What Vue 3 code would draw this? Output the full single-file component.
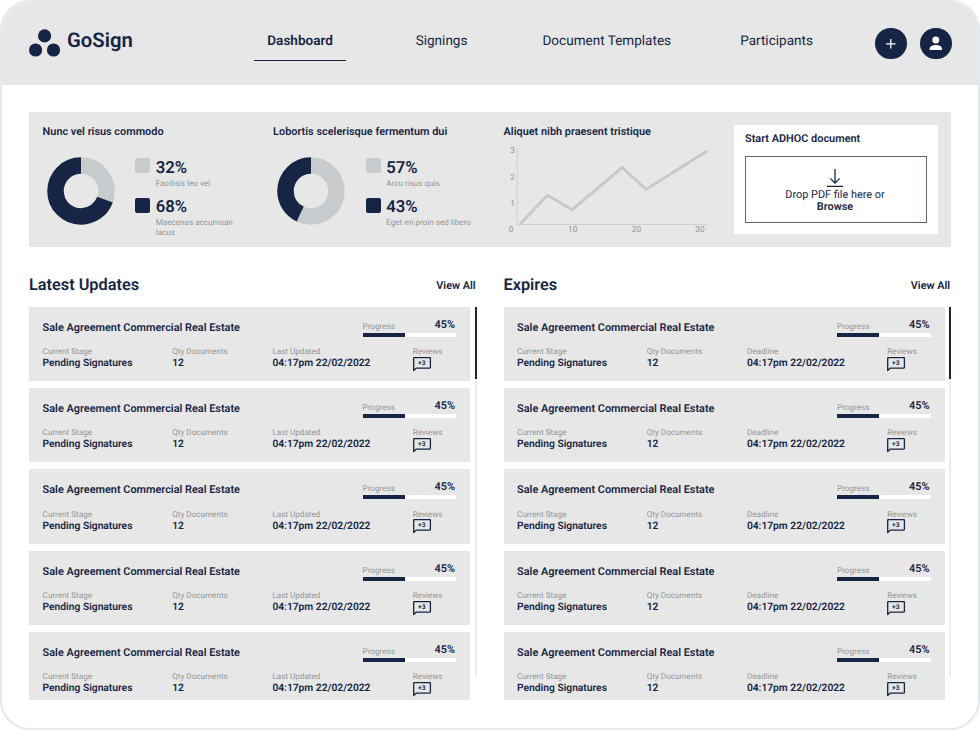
<template>
  <div class="window">
    <header class="header">
      <div class="brand">
        <svg class="brand-mark" width="32" height="28" viewBox="0 0 32 28">
          <circle cx="15.6" cy="6.9" r="6.6" />
          <circle cx="6.6" cy="21" r="6.6" />
          <circle cx="24.5" cy="21" r="6.6" />
        </svg>
        <span class="brand-name">GoSign</span>
      </div>
      <nav class="nav">
        <a
          v-for="item in navItems"
          :key="item"
          class="nav-item"
          :class="{ active: item === activeItem }"
          @click="activeItem = item"
        ><span>{{ item }}</span></a>
      </nav>
      <div class="actions">
        <button class="round-button">
          <svg width="32" height="32" viewBox="0 0 32 32">
            <path d="M16 11.2V20.8M11.2 16H20.8" stroke="#fff" stroke-width="1.3" />
          </svg>
        </button>
        <button class="round-button">
          <svg width="32" height="32" viewBox="0 0 32 32" fill="#fff">
            <circle cx="16" cy="12.2" r="3.5" />
            <path d="M9.8 22.2V20.8C9.8 18.2 13.4 17.1 16 17.1S22.2 18.2 22.2 20.8V22.2Z" />
          </svg>
        </button>
      </div>
    </header>

    <section class="stats">
      <div v-for="chart in charts" :key="chart.title" class="stat">
        <h3>{{ chart.title }}</h3>
        <div class="donut-row">
          <svg class="donut" width="68" height="68" viewBox="0 0 68 68">
            <circle class="ring light" cx="34" cy="34" r="25.5" />
            <circle
              class="ring dark"
              cx="34"
              cy="34"
              r="25.5"
              pathLength="100"
              :stroke-dasharray="`${100 - chart.split} 100`"
              :stroke-dashoffset="-chart.split"
              transform="rotate(-90 34 34)"
            />
          </svg>
          <div class="legend">
            <div v-for="(part, i) in chart.parts" :key="i" class="legend-item">
              <span class="swatch" :class="{ dark: i === 1 }"></span>
              <div>
                <div class="legend-value">{{ part.value }}%</div>
                <div class="legend-label">{{ part.label }}</div>
              </div>
            </div>
          </div>
        </div>
      </div>

      <div class="stat">
        <h3>Aliquet nibh praesent tristique</h3>
        <svg class="line-chart" width="214" height="94" viewBox="0 0 214 94">
          <path d="M13.2 3V79.5H204" fill="none" stroke="#cdd1d4" stroke-width="1" />
          <path d="M15.8 79.3 43.5 50.5 68.2 64.7 118.1 22.5 142 44.4 203 6" fill="none" stroke="#c8c9ca" stroke-width="3" />
          <g class="axis">
            <text x="11" y="8.4" text-anchor="end">3</text>
            <text x="11" y="34.8" text-anchor="end">2</text>
            <text x="11" y="61.2" text-anchor="end">1</text>
            <text x="7.2" y="87.2" text-anchor="middle">0</text>
            <text x="68.7" y="87.2" text-anchor="middle">10</text>
            <text x="132.4" y="87.2" text-anchor="middle">20</text>
            <text x="196" y="87.2" text-anchor="middle">30</text>
          </g>
        </svg>
      </div>

      <div class="adhoc">
        <h3>Start ADHOC document</h3>
        <div class="dropzone">
          <svg width="18" height="20" viewBox="0 0 18 20" fill="none" stroke="#162543" stroke-width="1.3">
            <path d="M9 0V14M4.3 9.4 9 14.1 13.7 9.4M.8 17.3H17.2" />
          </svg>
          <span>Drop PDF file here or</span>
          <b>Browse</b>
        </div>
      </div>
    </section>

    <main class="lists">
      <section v-for="list in lists" :key="list.title" class="list">
        <div class="list-head">
          <h2>{{ list.title }}</h2>
          <a class="view-all">View All</a>
        </div>
        <div class="list-body">
          <div class="cards">
            <article v-for="(doc, i) in documents" :key="i" class="card">
              <div class="card-top">
                <h4>{{ doc.title }}</h4>
                <div class="progress">
                  <div class="progress-text">
                    <span class="label">Progress</span>
                    <b>{{ doc.progress }}%</b>
                  </div>
                  <div class="track">
                    <div class="fill" :style="{ width: doc.progress + '%' }"></div>
                  </div>
                </div>
              </div>
              <div class="card-bottom">
                <div class="field stage">
                  <span class="label">Current Stage</span>
                  <b>{{ doc.stage }}</b>
                </div>
                <div class="field qty">
                  <span class="label">Qty Documents</span>
                  <b>{{ doc.qty }}</b>
                </div>
                <div class="field date">
                  <span class="label">{{ list.dateLabel }}</span>
                  <b>{{ doc.date }}</b>
                </div>
                <div class="field">
                  <span class="label">Reviews</span>
                  <svg class="bubble" width="19" height="15" viewBox="0 0 19 15">
                    <path d="M.7 13.6V1.2Q.7 .7 1.2 .7H16.9Q17.4 .7 17.4 1.2V10.6Q17.4 11.1 16.9 11.1H3.4Z" fill="none" stroke="#162543" stroke-width="1.3" stroke-linejoin="round" />
                    <text x="8.8" y="8.4" text-anchor="middle">+{{ doc.reviews }}</text>
                  </svg>
                </div>
              </div>
            </article>
          </div>
          <div class="scrollbar">
            <div class="thumb"></div>
          </div>
        </div>
      </section>
    </main>
  </div>
</template>

<script setup>
import { ref } from 'vue';

const navItems = ['Dashboard', 'Signings', 'Document Templates', 'Participants'];
const activeItem = ref('Dashboard');

// split - where the dark arc starts, in percent of the ring
const charts = [
  {
    title: 'Nunc vel risus commodo',
    split: 30.5,
    parts: [
      { value: 32, label: 'Facilisis leo vel' },
      { value: 68, label: 'Maecenas accumsan lacus' }
    ]
  },
  {
    title: 'Lobortis scelerisque fermentum dui',
    split: 57,
    parts: [
      { value: 57, label: 'Arcu risus quis' },
      { value: 43, label: 'Eget mi proin sed libero' }
    ]
  }
];

const lists = [
  { title: 'Latest Updates', dateLabel: 'Last Updated' },
  { title: 'Expires', dateLabel: 'Deadline' }
];

const documents = Array.from({ length: 5 }, () => ({
  title: 'Sale Agreement Commercial Real Estate',
  progress: 45,
  stage: 'Pending Signatures',
  qty: 12,
  date: '04:17pm 22/02/2022',
  reviews: 3
}));
</script>

<style>
body {
  margin: 0;
  background: #fff;
}
</style>

<style scoped>
.window {
  box-sizing: border-box;
  width: 980px;
  height: 730px;
  border: 2px solid #e5e9ec;
  border-radius: 30px;
  overflow: hidden;
  background: #fff;
  color: #162543;
  font-family: Roboto, sans-serif;
  text-rendering: geometricPrecision;
}

h2,
h3,
h4 {
  margin: 0;
  font-weight: 600;
}

b {
  font-weight: 600;
}

.header {
  display: flex;
  height: 82.5px;
  padding: 0 26.5px 0 27px;
  background: #e7e7e7;
}

.brand {
  display: flex;
  width: 225px;
  padding-top: 26.5px;
}

.brand-mark {
  fill: #162543;
}

.brand-name {
  margin: -1px 0 0 6px;
  font-size: 20.3px;
  line-height: 24px;
  font-weight: 600;
}

.nav {
  display: flex;
  flex: 1;
}

.nav-item {
  display: flex;
  height: 58.8px;
  box-sizing: border-box;
  padding: 30px 13.3px 0;
  font-size: 13.55px;
  line-height: 18px;
  white-space: nowrap;
  cursor: pointer;
}

.nav-item:nth-child(2) {
  margin-left: 56.2px;
}

.nav-item:nth-child(3) {
  margin-left: 48.4px;
}

.nav-item:nth-child(4) {
  margin-left: 42.5px;
}

.nav-item.active {
  border-bottom: 1.5px solid #162543;
  font-weight: 600;
}

.actions {
  display: flex;
  gap: 13px;
  padding-top: 25.5px;
}

.round-button {
  width: 31.6px;
  height: 31.6px;
  padding: 0;
  border: 0;
  border-radius: 50%;
  background: #162543;
}

.round-button svg {
  display: block;
  width: 100%;
  height: 100%;
}

.stats {
  display: flex;
  height: 135.5px;
  margin: 27.3px 27px 0;
  background: #e7e7e7;
}

.stat {
  box-sizing: border-box;
  width: 230.5px;
  padding: 13.3px 0 0 13.6px;
}

h3 {
  font-size: 10.9px;
  line-height: 13px;
  white-space: nowrap;
}

.donut-row {
  display: flex;
}

.donut {
  margin: 19px 0 0 4.4px;
}

.ring {
  fill: none;
  stroke-width: 16.5;
}

.ring.light {
  stroke: #c8cbcd;
}

.ring.dark {
  stroke: #162543;
}

.legend {
  margin: 20.3px 0 0 20.5px;
}

.legend-item {
  display: flex;
  height: 39.3px;
}

.swatch {
  width: 15px;
  height: 15px;
  margin-right: 5.2px;
  border-radius: 2px;
  background: #c8cbcd;
}

.swatch.dark {
  background: #162543;
}

.legend-value {
  padding-top: 1.2px;
  font-size: 16.7px;
  line-height: 18px;
  font-weight: 600;
}

.legend-label {
  width: 88px;
  margin-top: 0.6px;
  color: #929598;
  font-size: 8.15px;
  line-height: 10px;
}

.line-chart {
  display: block;
  margin-top: 6.7px;
}

.axis text {
  fill: #929598;
  font-size: 8.3px;
}

.adhoc {
  box-sizing: border-box;
  width: 204px;
  height: 109px;
  margin: 13.4px 0 0 13.5px;
  padding: 7px 11px 0;
  background: #fff;
}

.dropzone {
  display: flex;
  flex-direction: column;
  align-items: center;
  box-sizing: border-box;
  height: 67px;
  margin-top: 11px;
  padding: 12.3px 2px 0 0;
  border: 1px solid #5c6375;
  font-size: 10.9px;
  line-height: 12px;
}

.lists {
  display: flex;
  justify-content: space-between;
  padding: 0 27px;
}

.list {
  width: 447.5px;
}

.list-head {
  display: flex;
  justify-content: space-between;
  box-sizing: border-box;
  height: 59.3px;
  padding-top: 28px;
}

h2 {
  font-size: 16.3px;
  line-height: 20px;
}

.view-all {
  padding-right: 0.8px;
  font-size: 10.9px;
  line-height: 21px;
  font-weight: 600;
}

.list-body {
  display: flex;
  justify-content: space-between;
  height: 393px;
}

.cards {
  width: 441px;
  overflow: hidden;
}

.card {
  box-sizing: border-box;
  height: 74.3px;
  margin-bottom: 7.05px;
  padding: 14px 14px 0 13.6px;
  background: #e7e7e7;
}

.card-top {
  display: flex;
  justify-content: space-between;
  height: 25.4px;
}

h4 {
  font-size: 10.9px;
  line-height: 13px;
}

.progress {
  width: 93.5px;
  margin-top: -3px;
}

.progress-text {
  display: flex;
  justify-content: space-between;
  height: 15px;
  padding-right: 1px;
  font-size: 10.9px;
  line-height: 13px;
}

.progress-text .label {
  line-height: 16px;
}

.label {
  color: #929598;
  font-size: 8.15px;
  line-height: 10px;
}

.track {
  height: 4px;
  background: #fff;
}

.fill {
  height: 100%;
  background: #162543;
}

.card-bottom {
  display: flex;
}

.field {
  display: flex;
  flex-direction: column;
  font-size: 10.25px;
  line-height: 14px;
}

.stage {
  width: 129.6px;
}

.qty {
  width: 100.2px;
}

.date {
  width: 140.3px;
}

.bubble {
  margin-top: 0.6px;
}

.bubble text {
  fill: #162543;
  font-size: 6.6px;
  font-weight: 700;
}

.scrollbar {
  width: 1.8px;
  height: 369px;
  background: #ebecee;
}

.thumb {
  height: 72px;
  background: #162543;
}
</style>
